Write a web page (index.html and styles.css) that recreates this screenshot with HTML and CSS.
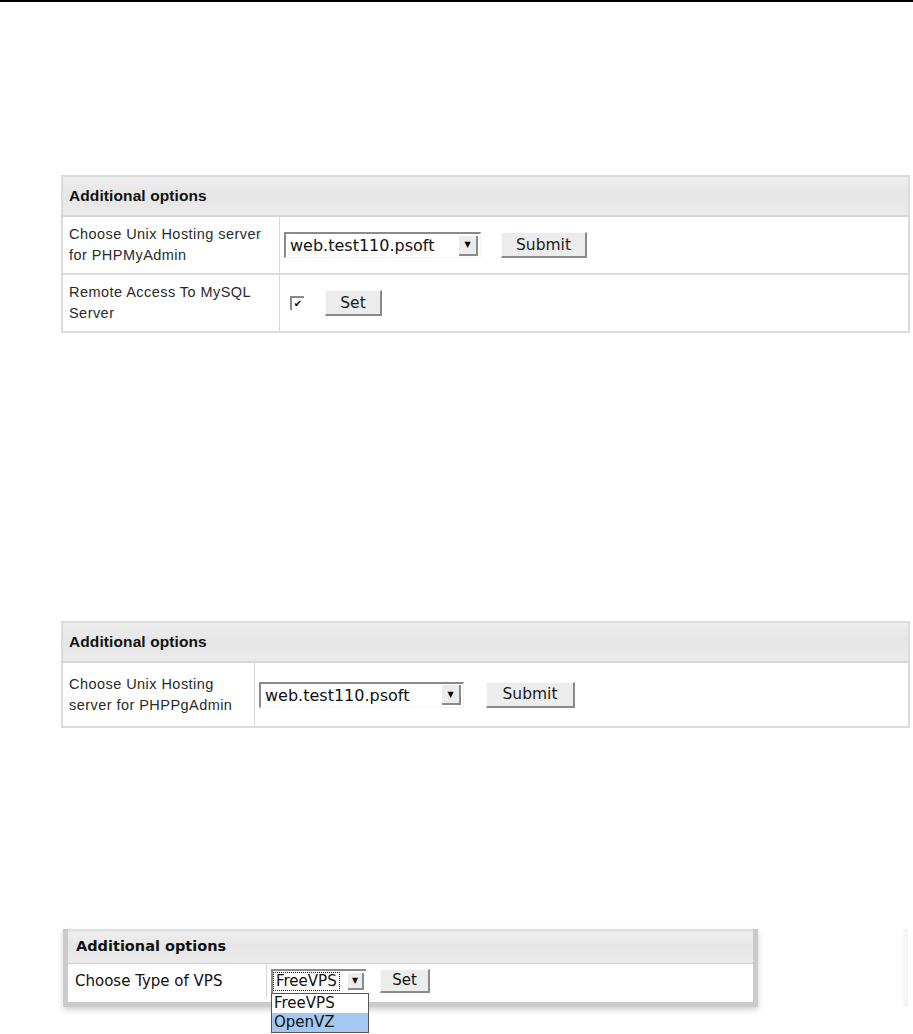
FILE: index.html
```html
<!DOCTYPE html>
<html>
<head>
<meta charset="utf-8">
<link rel="stylesheet" href="styles.css">
</head>
<body>
<div class="topbar"></div>

<table class="opts opts-1">
  <tr><th colspan="2" class="hdr">Additional options</th></tr>
  <tr>
    <td class="lbl lbl-1">Choose Unix Hosting server for PHPMyAdmin</td>
    <td class="ctl">
      <div class="ctlrow">
        <div class="sel"><span class="seltext">web.test110.psoft</span><span class="arrow">&#9660;</span></div>
        <div class="btn btn-submit">Submit</div>
      </div>
    </td>
  </tr>
  <tr>
    <td class="lbl lbl-1">Remote Access To MySQL Server</td>
    <td class="ctl">
      <div class="ctlrow">
        <div class="chk">&#10004;</div>
        <div class="btn btn-set">Set</div>
      </div>
    </td>
  </tr>
</table>

<table class="opts opts-2">
  <tr><th colspan="2" class="hdr">Additional options</th></tr>
  <tr>
    <td class="lbl lbl-2">Choose Unix Hosting server for PHPPgAdmin</td>
    <td class="ctl">
      <div class="ctlrow">
        <div class="sel sel-2"><span class="seltext">web.test110.psoft</span><span class="arrow">&#9660;</span></div>
        <div class="btn btn-submit">Submit</div>
      </div>
    </td>
  </tr>
</table>

<div class="vps-wrap">
  <div class="vps">
    <div class="vps-hdr">Additional options</div>
    <div class="vps-row">
      <div class="vps-lbl">Choose Type of VPS</div>
      <div class="vps-ctl">
        <div class="vsel-box">
          <div class="vsel"><span class="vseltext">FreeVPS</span><span class="varrow">&#9660;</span></div>
          <ul class="vlist">
            <li>FreeVPS</li>
            <li class="active">OpenVZ</li>
          </ul>
        </div>
        <div class="vbtn">Set</div>
      </div>
    </div>
  </div>
  <div class="vps-side"></div>
</div>
</body>
</html>
```

FILE: styles.css
```css
html, body {
  margin: 0;
  padding: 0;
  background: #ffffff;
}
body {
  font-family: "Liberation Sans", Arial, sans-serif;
  color: #1a1a1a;
  min-height: 1034px;
}
.topbar {
  height: 2px;
  background: #000;
}

.opts {
  border-collapse: collapse;
  margin-left: 61px;
  width: 849px;
  border: 2px solid #dcdcdc;
}
.opts-1 { margin-top: 173px; }
.opts-2 { margin-top: 288px; }

.hdr {
  text-align: left;
  font-weight: bold;
  font-size: 15.5px;
  letter-spacing: 0.1px;
  height: 38px;
  padding: 0 0 0 6px;
  background: linear-gradient(#ededed, #e6e6e6 50%, #ebebeb);
  border-bottom: 2px solid #d6d6d6;
  color: #111;
}
.lbl {
  font-size: 14.5px;
  letter-spacing: 0.45px;
  line-height: 21px;
  padding: 7px 6px 7px 6px;
  border-right: 1px solid #d8d8d8;
  border-bottom: 2px solid #dcdcdc;
  vertical-align: middle;
  color: #2a2a2a;
}
.lbl-1 { width: 204px; }
.lbl-2 { width: 179px; padding-top: 11px; padding-bottom: 10px; }
.ctl {
  padding: 0 0 0 4px;
  border-bottom: 2px solid #dcdcdc;
  vertical-align: middle;
}
.ctlrow {
  display: flex;
  align-items: center;
}
.sel {
  display: flex;
  align-items: center;
  width: 197px;
  height: 26px;
  box-sizing: border-box;
  border-top: 2px solid #8a8a8a;
  border-left: 2px solid #8a8a8a;
  border-right: 1px solid #f4f4f4;
  border-bottom: 1px solid #f4f4f4;
  background: #fff;
  font-family: "DejaVu Sans", sans-serif;
  font-size: 16px;
  color: #111;
  padding-left: 4px;
  padding-right: 2px;
  justify-content: space-between;
}
.sel-2 { width: 205px; }
.arrow {
  width: 19px;
  height: 20px;
  box-sizing: border-box;
  background: #ececec;
  border-right: 2px solid #8a8a8a;
  border-bottom: 2px solid #8a8a8a;
  font-size: 8px;
  display: flex;
  align-items: center;
  justify-content: center;
  color: #000;
}
.btn {
  font-family: "DejaVu Sans", sans-serif;
  font-size: 15.5px;
  color: #1a1a1a;
  background: #ececec;
  border-top: 1px solid #fafafa;
  border-left: 1px solid #fafafa;
  border-right: 2px solid #8a8a8a;
  border-bottom: 2px solid #8a8a8a;
  height: 26px;
  box-sizing: border-box;
  display: flex;
  align-items: center;
  justify-content: center;
}
.btn-submit {
  width: 86px;
  margin-left: 20px;
}
.sel-2 + .btn-submit { width: 89px; margin-left: 22px; }
.btn-set {
  width: 57px;
  margin-left: 21px;
}
.chk {
  width: 14px;
  height: 14px;
  box-sizing: border-box;
  margin-left: 6px;
  border-top: 2px solid #8a8a8a;
  border-left: 2px solid #8a8a8a;
  background: #fff;
  font-family: "DejaVu Sans", sans-serif;
  font-size: 10px;
  line-height: 12px;
  text-align: center;
  color: #000;
}

/* third block */
.vps-wrap {
  display: flex;
  margin-top: 201px;
  margin-left: 63px;
}
.vps {
  width: 695px;
  box-sizing: border-box;
  border: 5px solid #cbcbcb;
  border-top: 0;
  box-shadow: 0 3px 6px rgba(0,0,0,0.18);
  font-family: "DejaVu Sans", sans-serif;
  font-size: 15px;
  color: #111;
}
.vps-hdr {
  height: 35px;
  box-sizing: border-box;
  padding-left: 8px;
  display: flex;
  align-items: center;
  font-weight: bold;
  font-size: 14.5px;
  background: linear-gradient(#dedede 0, #dedede 2px, #eeeeee 3px, #e6e6e6 50%, #ebebeb);
  border-bottom: 1px solid #cfcfcf;
}
.vps-row {
  display: flex;
  height: 33px;
  background: #fff;
}
.vps-lbl {
  width: 199px;
  box-sizing: border-box;
  padding-left: 7px;
  display: flex;
  align-items: center;
  border-right: 1px solid #d6d6d6;
}
.vps-ctl {
  display: flex;
  align-items: center;
  padding-left: 4px;
}
.vsel-box {
  position: relative;
}
.vsel {
  width: 95px;
  height: 24px;
  box-sizing: border-box;
  display: flex;
  align-items: center;
  justify-content: space-between;
  border-top: 2px solid #8a8a8a;
  border-left: 2px solid #8a8a8a;
  background: #fff;
  padding-right: 2px;
}
.vseltext {
  border: 1px dotted #222;
  padding: 0 2px;
  line-height: 17px;
  font-size: 15px;
}
.varrow {
  width: 16px;
  height: 17px;
  box-sizing: border-box;
  background: #ececec;
  border-right: 2px solid #8a8a8a;
  border-bottom: 2px solid #8a8a8a;
  font-size: 8px;
  display: flex;
  align-items: center;
  justify-content: center;
}
.vlist {
  position: absolute;
  left: 0;
  top: 24px;
  margin: 0;
  padding: 0;
  list-style: none;
  width: 96px;
  border: 1px solid #555;
  background: #fff;
  font-size: 15px;
  z-index: 2;
}
.vlist li {
  height: 19px;
  line-height: 19px;
  padding-left: 2px;
}
.vlist li.active {
  background: #a4c8f0;
}
.vbtn {
  margin-left: 14px;
  width: 50px;
  height: 24px;
  box-sizing: border-box;
  display: flex;
  align-items: center;
  justify-content: center;
  background: #ececec;
  border-top: 1px solid #fafafa;
  border-left: 1px solid #fafafa;
  border-right: 2px solid #8a8a8a;
  border-bottom: 2px solid #8a8a8a;
  font-size: 15px;
}
.vps-side {
  width: 8px;
  margin-left: 142px;
  height: 78px;
  background: linear-gradient(90deg, #ffffff, #f2f2f2);
}
```
